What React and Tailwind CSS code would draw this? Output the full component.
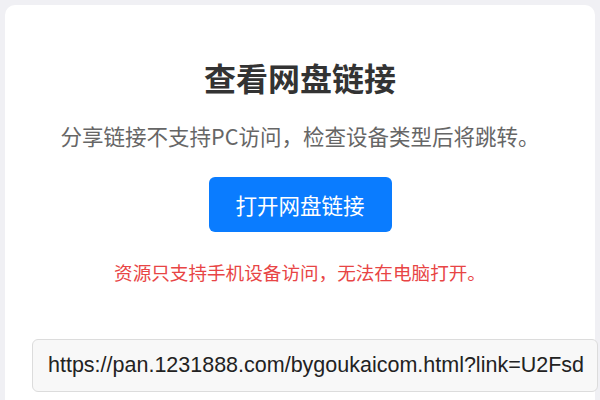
export default function App() {
  return (
    <div className="w-[600px] h-[400px] overflow-hidden bg-[#f0f0f4] pt-[5px] px-[5px]" style={{ fontFamily: '"Noto Sans CJK SC", "Noto Sans", sans-serif' }}>
      <div className="w-[590px] h-[420px] bg-white rounded-[10px] pt-[53px] px-[27px] flex flex-col">
        <h1 className="text-[32px] leading-[38px] font-bold text-[#333] text-center">查看网盘链接</h1>
        <p className="mt-[25px] text-[21.5px] leading-[30px] text-[#666] text-center">分享链接不支持PC访问，检查设备类型后将跳转。</p>
        <div className="mt-[26px] flex justify-center">
          <button className="h-[55px] w-[183px] rounded-[6px] bg-[#0a7cff] text-white text-[21.5px] leading-[30px]">打开网盘链接</button>
        </div>
        <p className="mt-[27px] text-[18.6px] leading-[26px] text-[#e84545] text-center">资源只支持手机设备访问，无法在电脑打开。</p>
        <div className="mt-[54px] w-[566px] h-[53px] shrink-0 border border-[#dcdcdc] bg-[#f8f8f8] rounded-[6px] px-[15px] flex items-center text-[21.5px] text-[#222] whitespace-nowrap" style={{ fontFamily: '"Liberation Sans", Arial, sans-serif' }}>
          https://pan.1231888.com/bygoukaicom.html?link=U2Fsd
        </div>
      </div>
    </div>
  );
}
